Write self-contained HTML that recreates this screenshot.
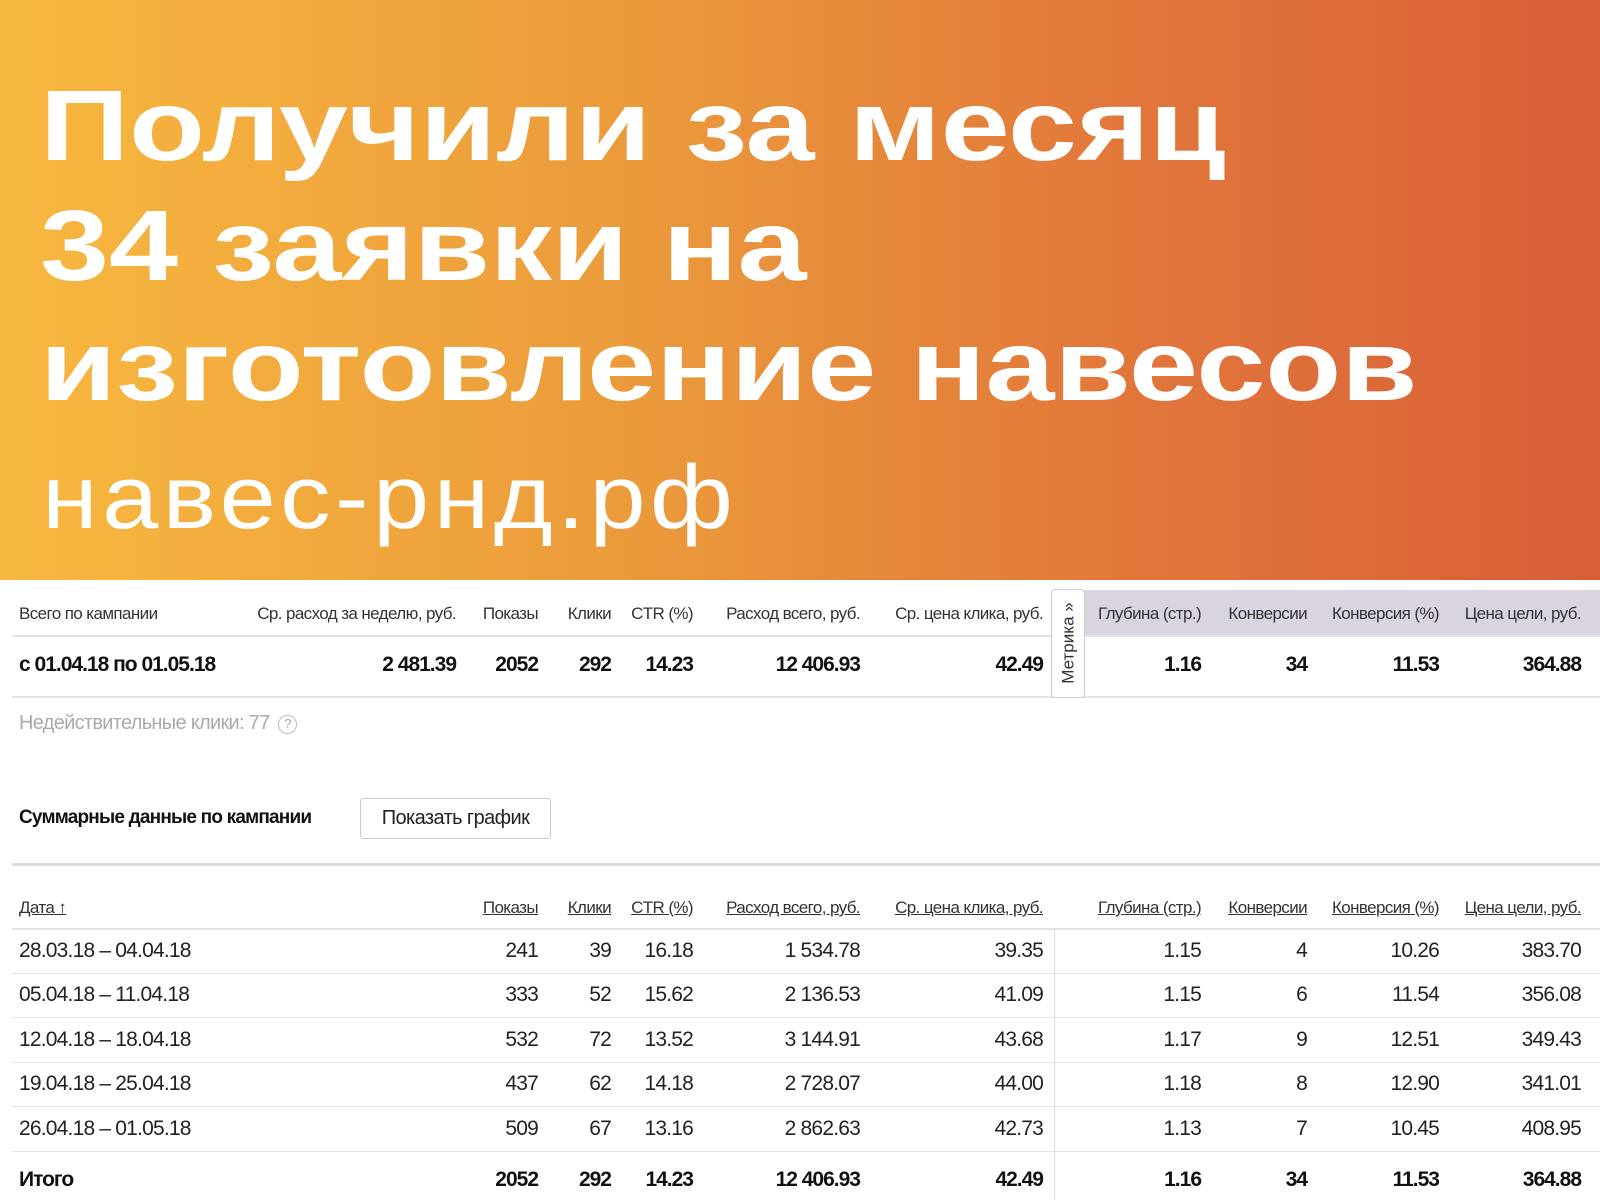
<!DOCTYPE html>
<html><head><meta charset="utf-8"><style>
*{margin:0;padding:0;box-sizing:border-box}
body{width:1600px;height:1200px;overflow:hidden;background:#fff;position:relative;font-family:"Liberation Sans Narrow","Liberation Sans",sans-serif;color:#222}
#ban{position:absolute;left:0;top:0;width:1600px;height:580px;background:linear-gradient(90deg,#f7b83f 0%,#eb9a3b 40%,#e2773a 70%,#d85f38 100%)}
.t{position:absolute;left:40px;color:#fff;font-family:"Liberation Sans",sans-serif;font-weight:bold;font-size:100px;line-height:1;white-space:nowrap;transform-origin:0 0}
.u{position:absolute;left:42px;top:453px;color:#fff;font-family:"Liberation Sans",sans-serif;font-size:90px;line-height:1;white-space:nowrap;letter-spacing:4px;transform:scaleX(1.12);transform-origin:0 0}
.a{position:absolute;white-space:nowrap;line-height:1}
.r{text-align:right}
.h{font-size:17px;color:#333;letter-spacing:-0.6px}
.b{font-size:21px;font-weight:bold;color:#111;letter-spacing:-1px}
.d{font-size:21px;color:#222;letter-spacing:-0.8px}
.hl{font-size:17px;color:#333;text-decoration:underline;letter-spacing:-0.6px}
.ln{position:absolute;left:12px;right:0;height:2px;background:#e2e2e2}
</style></head><body>
<div id="ban"></div>
<div class="t" style="top:76px;transform:scaleX(1.24)">Получили за месяц</div>
<div class="t" style="top:196px;transform:scaleX(1.24)">34 заявки на</div>
<div class="t" style="top:316px;transform:scaleX(1.24)">изготовление навесов</div>
<div class="u">навес-рнд.рф</div>

<div style="position:absolute;left:1084px;top:590px;width:516px;height:46px;background:#d9d4df"></div>
<div class="ln" style="top:635px"></div>
<div class="ln" style="top:696px"></div>
<div style="position:absolute;left:1051px;top:589px;width:34px;height:109px;border:1px solid #ccc;border-radius:4px;background:#fff"></div>
<div class="a" style="left:1068px;top:643px;transform:translate(-50%,-50%) rotate(-90deg);font-family:'Liberation Sans',sans-serif;font-size:17px;color:#333">Метрика »</div>

<div class="a" style="left:19px;top:713px;font-size:20px;color:#aaa;letter-spacing:-0.7px">Недействительные клики: 77 <span style="display:inline-block;width:19px;height:19px;border:1.5px solid #bbb;border-radius:50%;font-size:13px;text-align:center;line-height:16px;vertical-align:1px;margin-left:4px;letter-spacing:0">?</span></div>
<div class="a b" style="left:19px;top:808px;font-size:19px;letter-spacing:-0.8px">Суммарные данные по кампании</div>
<div style="position:absolute;left:360px;top:798px;width:191px;height:41px;border:1.5px solid #ccc;border-radius:3px;font-size:20px;text-align:center;line-height:38px;color:#222;letter-spacing:-0.6px">Показать график</div>
<div style="position:absolute;left:12px;right:0;top:863px;height:3px;background:#ddd"></div>
<div class="ln" style="top:928px"></div>
<div style="position:absolute;left:1054px;top:929px;width:1px;height:271px;background:#ddd"></div>

<script>
var H=document.body;
function put(cls,txt,left,right,top){var e=document.createElement('div');e.className='a '+cls+(right?' r':'');e.textContent=txt;e.style.top=top+'px';if(right){e.style.right=(1600-right)+'px'}else e.style.left=left+'px';H.appendChild(e)}
var ends=[456,538,611,693,860,1043,1201,1307,1439,1581];
var h1=['Ср. расход за неделю, руб.','Показы','Клики','CTR (%)','Расход всего, руб.','Ср. цена клика, руб.','Глубина (стр.)','Конверсии','Конверсия (%)','Цена цели, руб.'];
put('h','Всего по кампании',19,0,605);
h1.forEach(function(t,i){put('h',t,0,ends[i],605)});
var r1=['2 481.39','2052','292','14.23','12 406.93','42.49','1.16','34','11.53','364.88'];
put('b','с 01.04.18 по 01.05.18',19,0,654);
r1.forEach(function(t,i){put('b',t,0,ends[i],654)});
var e2=ends.slice(1);
put('hl','Дата ↑',19,0,899);
h1.slice(1).forEach(function(t,i){put('hl',t,0,e2[i],899)});
var data=[['28.03.18 – 04.04.18','241','39','16.18','1 534.78','39.35','1.15','4','10.26','383.70'],
['05.04.18 – 11.04.18','333','52','15.62','2 136.53','41.09','1.15','6','11.54','356.08'],
['12.04.18 – 18.04.18','532','72','13.52','3 144.91','43.68','1.17','9','12.51','349.43'],
['19.04.18 – 25.04.18','437','62','14.18','2 728.07','44.00','1.18','8','12.90','341.01'],
['26.04.18 – 01.05.18','509','67','13.16','2 862.63','42.73','1.13','7','10.45','408.95']];
var ys=[940,984,1029,1073,1118];
data.forEach(function(r,j){put('d',r[0],19,0,ys[j]);r.slice(1).forEach(function(t,i){put('d',t,0,e2[i],ys[j])});
var l=document.createElement('div');l.className='ln';l.style.height='1px';l.style.top=(ys[j]+33)+'px';H.appendChild(l)});
var tot=['Итого','2052','292','14.23','12 406.93','42.49','1.16','34','11.53','364.88'];
put('b',tot[0],19,0,1169);
tot.slice(1).forEach(function(t,i){put('b',t,0,e2[i],1169)});
</script>
</body></html>
